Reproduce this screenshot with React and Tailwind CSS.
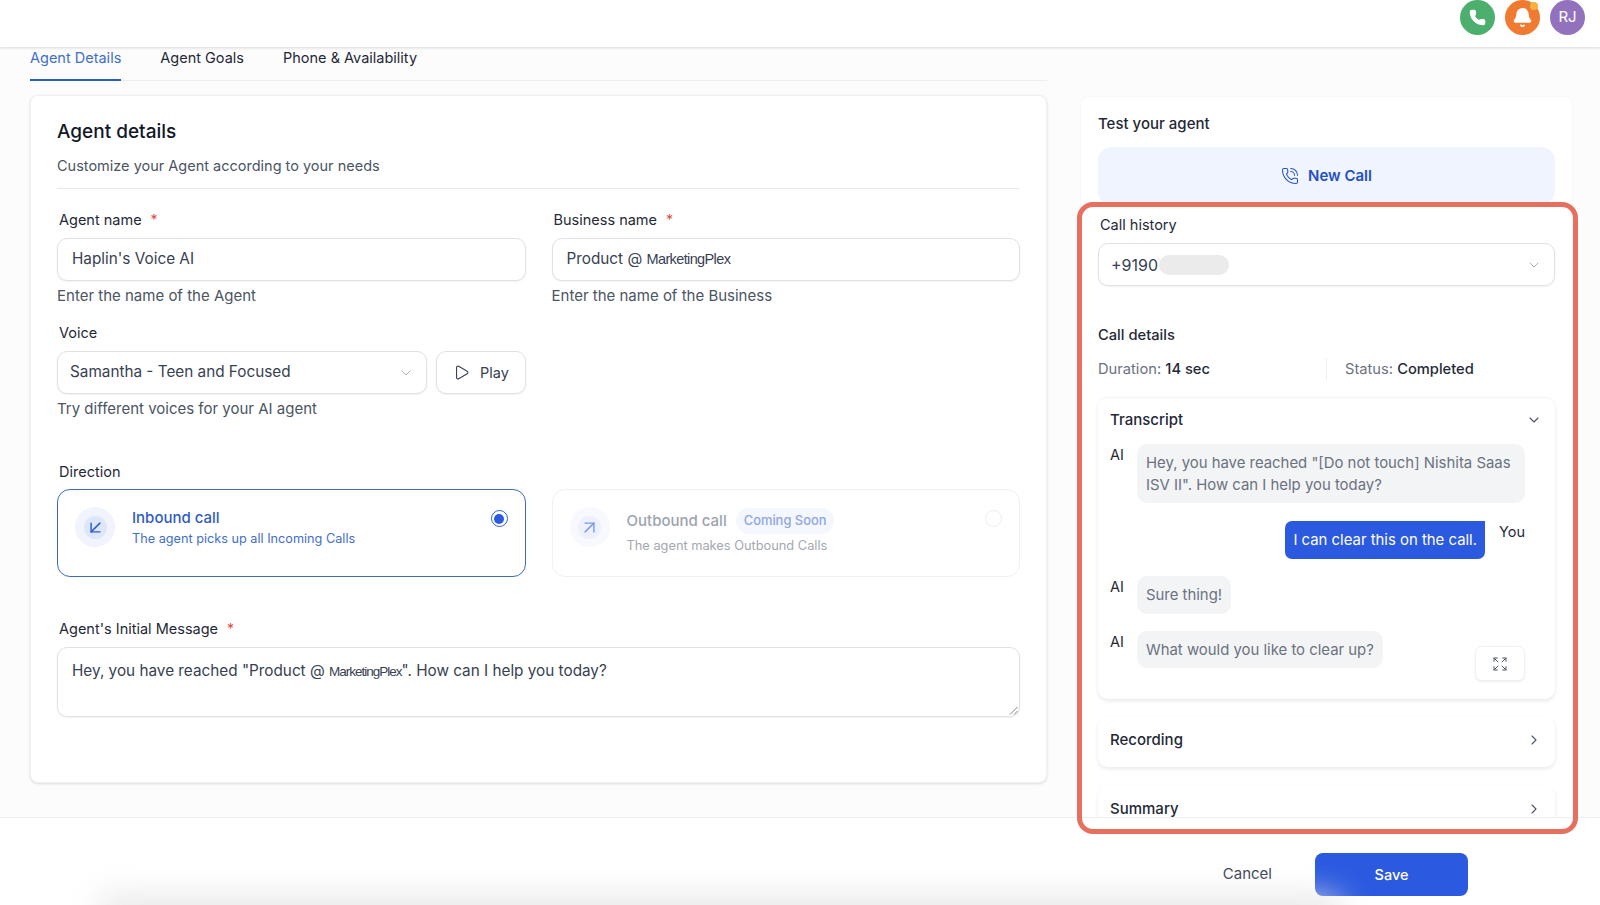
import React from "react";
import { Phone, Bell, PhoneCall, ChevronDown, ChevronRight, Play, ArrowDownLeft, ArrowUpRight, Expand } from "lucide-react";

const Brand = () => (
  <span className="font-['Liberation_Sans'] text-[14.5px] tracking-[-0.62px]">MarketingPlex</span>
);

const Req = () => <span className="text-[#dc4a42] ml-[9px] text-[14px]">*</span>;

function Field({ label, value, help, className = "" }) {
  return (
    <div className={"flex flex-col " + className}>
      <div className="h-[18px] ml-[2px] leading-[18px] text-[14.5px] text-[#1f2937]">
        {label}
        <Req />
      </div>
      <div className="mt-[9px] h-[43px] rounded-[10px] border border-[#dfe1e5] bg-white flex items-center pl-[14px] text-[15.3px] text-[#374151] shadow-[0_1px_2px_rgba(0,0,0,0.06)]">
        {value}
      </div>
      <div className="mt-[5px] h-[20px] leading-[20px] text-[15px] text-[#4b5563]">{help}</div>
    </div>
  );
}

function Bubble({ who = "AI", children, className = "" }) {
  return (
    <div className={"flex " + className}>
      <div className="w-[27px] shrink-0 text-[14.5px] leading-[20px] pt-[1px] text-[#1f2937]">{who}</div>
      <div className="rounded-[10px] bg-[#f3f4f6] px-[9px] pt-[9px] pb-[7px] text-[14.9px] leading-[21.5px] text-[#6b7280]">{children}</div>
    </div>
  );
}

function Fold({ title, className = "" }) {
  return (
    <div className={"h-[50px] shrink-0 rounded-[10px] bg-white px-[12px] pb-[4px] flex items-center justify-between shadow-[0_2px_4px_rgba(0,0,0,0.09)] " + className}>
      <span className="text-[15px] font-medium text-[#1f2937]">{title}</span>
      <ChevronRight size={16} strokeWidth={1.6} className="text-[#4b5563] mr-[1px]" />
    </div>
  );
}

export default function App() {
  return (
    <div className="relative w-[1600px] h-[905px] overflow-hidden flex flex-col bg-white font-['Inter',sans-serif]">
      {/* top bar */}
      <header className="relative z-10 h-[47px] shrink-0 bg-white shadow-[0_1px_3px_rgba(0,0,0,0.14)] flex items-start justify-end gap-[10px] pr-[15px]">
        <div className="w-[35px] h-[35px] rounded-full bg-[#4caf6e] flex items-center justify-center">
          <Phone size={17} fill="white" stroke="white" />
        </div>
        <div className="relative w-[35px] h-[35px] rounded-full bg-[#f07a2f] flex items-center justify-center">
          <Bell size={21} fill="white" stroke="white" />
          <span className="absolute top-[2px] right-[2px] w-[8px] h-[8px] rounded-full bg-[#f5b041]" />
        </div>
        <div className="w-[35px] h-[35px] rounded-full bg-[#9272bd] flex items-center justify-center text-[15px] text-white">RJ</div>
      </header>

      {/* body */}
      <main className="h-[771px] shrink-0 overflow-hidden bg-[#fcfcfc] border-b border-[#eeeeee] flex pl-[30px]">
        <div className="w-[1017px] shrink-0 flex flex-col">
          <nav className="h-[34px] shrink-0 flex gap-[39px] border-b border-[#eceef0] text-[14.5px] text-[#1f2937]">
            <div className="h-[34px] pt-[1px] leading-[20px] border-b-2 border-[#2a5cc4] text-[#3f6fca]">Agent Details</div>
            <div className="pt-[1px] leading-[20px]">Agent Goals</div>
            <div className="pt-[1px] leading-[20px]">Phone &amp; Availability</div>
          </nav>

          <section className="mt-[14px] h-[688px] rounded-[8px] bg-white border border-[#f0f0f0] shadow-[0_1px_3px_rgba(0,0,0,0.13)] px-[26px] pt-[24px]">
            <h1 className="text-[19px] leading-[24px] font-medium text-[#111827]">Agent details</h1>
            <p className="mt-[12px] text-[14.5px] leading-[20px] text-[#4b5563]">Customize your Agent according to your needs</p>
            <div className="mt-[12px] h-px bg-[#e7e8ea]" />

            <div className="mt-[22px] grid grid-cols-2 gap-x-[26px]">
              <Field label="Agent name" value="Haplin's Voice AI" help="Enter the name of the Agent" />
              <Field label="Business name" value={<span>Product @ <Brand /></span>} help="Enter the name of the Business" />
            </div>

            <div className="mt-[18px] w-[469px]">
              <div className="ml-[2px] h-[18px] leading-[18px] text-[14.5px] text-[#1f2937]">Voice</div>
              <div className="mt-[9px] flex gap-[9px]">
                <div className="flex-1 h-[43px] rounded-[10px] border border-[#dfe1e5] bg-white flex items-center justify-between pl-[12px] pr-[12px] text-[15.3px] text-[#374151] shadow-[0_1px_2px_rgba(0,0,0,0.06)]">
                  Samantha - Teen and Focused
                  <ChevronDown size={16} strokeWidth={1.3} className="text-[#9ca3af]" />
                </div>
                <div className="w-[90px] h-[43px] rounded-[10px] border border-[#dfe1e5] bg-white flex items-center justify-center gap-[10px] text-[14.5px] text-[#374151] shadow-[0_1px_2px_rgba(0,0,0,0.06)]">
                  <Play size={17} strokeWidth={1.5} />
                  Play
                </div>
              </div>
              <div className="mt-[5px] h-[20px] leading-[20px] text-[15px] text-[#4b5563]">Try different voices for your AI agent</div>
            </div>

            <div className="mt-[44px] ml-[2px] h-[18px] leading-[18px] text-[14.5px] text-[#1f2937]">Direction</div>
            <div className="mt-[8px] grid grid-cols-2 gap-x-[26px]">
              <div className="relative h-[88px] rounded-[13px] border border-[#3f6cb8] bg-white flex pl-[17px] pt-[17px]">
                <div className="w-[40px] h-[40px] rounded-full bg-[#f1f4fd] flex items-center justify-center">
                  <div className="w-[23px] h-[23px] rounded-full bg-[#dde6fb] flex items-center justify-center">
                    <ArrowDownLeft size={21} strokeWidth={1.7} className="text-[#2f5fd8]" />
                  </div>
                </div>
                <div className="ml-[17px] mt-[1px]">
                  <div className="text-[15px] leading-[20px] font-medium text-[#2f5cc0]">Inbound call</div>
                  <div className="mt-[2px] text-[12.7px] leading-[18px] text-[#3f6fca]">The agent picks up all Incoming Calls</div>
                </div>
                <div className="absolute top-[20px] right-[17px] w-[17px] h-[17px] rounded-full border border-[#2f5fd8] flex items-center justify-center">
                  <span className="w-[10px] h-[10px] rounded-full bg-[#2b59e0]" />
                </div>
              </div>
              <div className="relative h-[88px] rounded-[13px] border border-[#f0f1f3] bg-white flex pl-[17px] pt-[17px]">
                <div className="w-[40px] h-[40px] rounded-full bg-[#f7f9fe] flex items-center justify-center">
                  <div className="w-[23px] h-[23px] rounded-full bg-[#edf1fd] flex items-center justify-center">
                    <ArrowUpRight size={21} strokeWidth={1.7} className="text-[#7f9be8]" />
                  </div>
                </div>
                <div className="ml-[17px] mt-[1px]">
                  <div className="flex items-center gap-[9px]">
                    <span className="text-[15px] leading-[24px] font-medium text-[#9ca3af]">Outbound call</span>
                    <span className="h-[26px] px-[8px] rounded-full bg-[#f5f7fe] flex items-center text-[12.9px] font-medium text-[#8fa6e6]">Coming Soon</span>
                  </div>
                  <div className="mt-[3px] text-[12.8px] leading-[18px] text-[#a3a8b1]">The agent makes Outbound Calls</div>
                </div>
                <div className="absolute top-[20px] right-[17px] w-[17px] h-[17px] rounded-full border border-[#eceef0]" />
              </div>
            </div>

            <div className="mt-[43px] ml-[2px] h-[18px] leading-[18px] text-[14.5px] text-[#1f2937]">
              Agent's Initial Message
              <Req />
            </div>
            <div className="relative mt-[9px] h-[70px] rounded-[10px] border border-[#dfe1e5] bg-white pl-[14px] pt-[13px] text-[15.3px] leading-[20px] text-[#374151] shadow-[0_1px_2px_rgba(0,0,0,0.06)]">
              Hey, you have reached "Product @ <span className="font-['Liberation_Sans'] text-[13.5px] tracking-[-1px]">MarketingPlex</span>". How can I help you today?
              <svg className="absolute right-[1px] bottom-[1px]" width="9" height="9" viewBox="0 0 9 9" fill="none" stroke="#6b7280" strokeWidth="0.9">
                <path d="M1 8.5 8.5 1M5 8.5 8.5 5" />
              </svg>
            </div>
          </section>
        </div>

        <aside className="ml-[34px] mt-[50px] w-[491px] shrink-0 rounded-t-[8px] bg-white shadow-[0_0_3px_rgba(0,0,0,0.05)] pl-[17px] pr-[17px] flex flex-col">
          <div className="mt-[17px] h-[20px] leading-[20px] text-[15px] font-medium text-[#1f2937]">Test your agent</div>
          <div className="mt-[13px] h-[58px] shrink-0 rounded-[14px] bg-[#eff4fe] flex items-center justify-center gap-[9px] text-[15px] font-semibold text-[#2450c4]">
            <PhoneCall size={18} strokeWidth={1.4} />
            New Call
          </div>

          <div className="mt-[11px] ml-[2px] h-[18px] leading-[18px] text-[14.5px] text-[#1f2937]">Call history</div>
          <div className="mt-[9px] h-[43px] shrink-0 rounded-[10px] border border-[#dfe1e5] bg-white flex items-center justify-between pl-[12px] pr-[12px] shadow-[0_1px_2px_rgba(0,0,0,0.06)]">
            <div className="flex items-center text-[16px] text-[#374151]">
              +9190
              <span className="ml-[1px] w-[70px] h-[20px] rounded-full bg-[#ebebeb]" />
            </div>
            <ChevronDown size={16} strokeWidth={1.3} className="text-[#9ca3af]" />
          </div>

          <div className="mt-[39px] h-[20px] leading-[20px] text-[14.7px] font-medium text-[#1f2937]">Call details</div>
          <div className="mt-[14px] h-[20px] flex items-center text-[14.7px]">
            <div className="w-[228px] text-[#6b7280]">Duration: <span className="font-medium text-[#1f2937]">14 sec</span></div>
            <div className="w-px h-[22px] bg-[#eceef0]" />
            <div className="ml-[18px] text-[#6b7280]">Status: <span className="font-medium text-[#1f2937]">Completed</span></div>
          </div>

          <div className="relative mt-[18px] h-[302px] shrink-0 rounded-[10px] bg-white px-[12px] pt-[12px] shadow-[0_2px_4px_rgba(0,0,0,0.09)] border-t border-[#f5f5f5]">
            <div className="flex items-center justify-between h-[20px]">
              <span className="text-[15px] font-medium text-[#1f2937]">Transcript</span>
              <ChevronDown size={16} strokeWidth={1.6} className="text-[#4b5563] mr-[1px]" />
            </div>
            <Bubble className="mt-[14px] w-[415px]">
              Hey, you have reached "[Do not touch] Nishita Saas ISV II". How can I help you today?
            </Bubble>
            <div className="mt-[18px] flex justify-end mr-[18px]">
              <div className="h-[38px] rounded-l-[7px] rounded-br-[7px] bg-[#2b59e0] px-[8px] flex items-center text-[14.9px] text-white">I can clear this on the call.</div>
              <div className="ml-[14px] text-[14.5px] leading-[20px] pt-[1px] text-[#1f2937]">You</div>
            </div>
            <Bubble className="mt-[17px]">Sure thing!</Bubble>
            <Bubble className="mt-[17px]">What would you like to clear up?</Bubble>
            <div className="absolute right-[30px] bottom-[18px] w-[50px] h-[35px] rounded-[7px] bg-white border border-[#f0f1f3] shadow-[0_1px_2px_rgba(0,0,0,0.08)] flex items-center justify-center">
              <Expand size={16} strokeWidth={1.5} className="text-[#4b5563]" />
            </div>
          </div>

          <Fold title="Recording" className="mt-[18px]" />
          <Fold title="Summary" className="mt-[19px]" />
        </aside>
      </main>

      {/* actions */}
      <footer className="flex-1 bg-white flex items-center justify-end pr-[132px] gap-[43px] pt-[26px]">
        <span className="text-[15px] text-[#374151]">Cancel</span>
        <div className="w-[153px] h-[43px] rounded-[8px] bg-[#2b59e0] flex items-center justify-center text-[14.5px] font-medium text-white">Save</div>
      </footer>

      {/* annotation + soft shadow */}
      <div className="absolute left-[1077px] top-[202px] w-[501px] h-[632px] rounded-[16px] border-[5px] border-[#e76f5e] pointer-events-none" />
      <div className="absolute left-[100px] -bottom-[18px] w-[1240px] h-[26px] bg-[#e4e4e4] blur-lg pointer-events-none" />
    </div>
  );
}
